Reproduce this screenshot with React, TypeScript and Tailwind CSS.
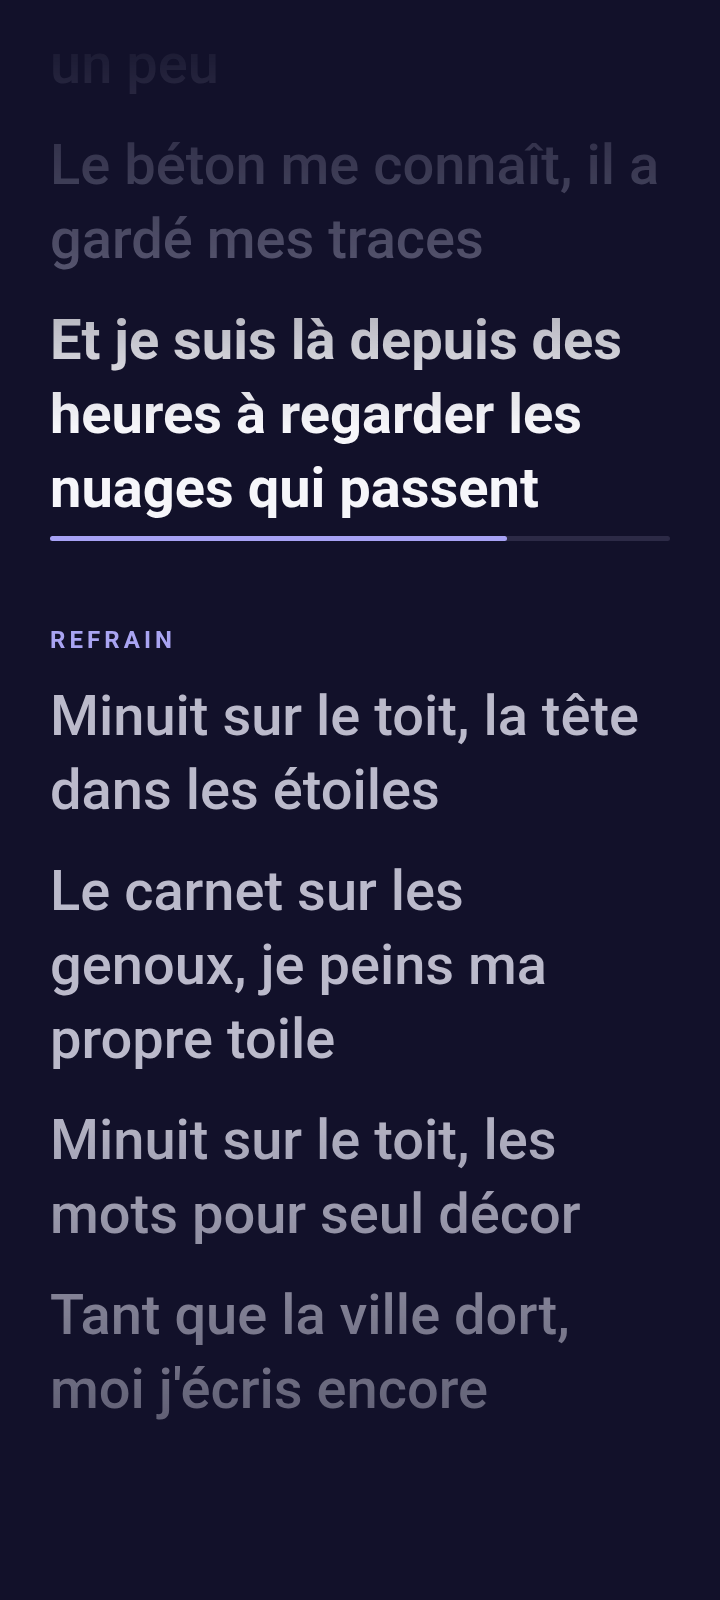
type Line = { text: string; state: "past" | "active" | "next"; section?: string };

const lines: Line[] = [
  { text: "un peu", state: "past" },
  { text: "Le béton me connaît, il a gardé mes traces", state: "past" },
  { text: "Et je suis là depuis des heures à regarder les nuages qui passent", state: "active" },
  { text: "Minuit sur le toit, la tête dans les étoiles", state: "next", section: "Refrain" },
  { text: "Le carnet sur les genoux, je peins ma propre toile", state: "next" },
  { text: "Minuit sur le toit, les mots pour seul décor", state: "next" },
  { text: "Tant que la ville dort, moi j'écris encore", state: "next" },
];

const progress = 73.7;

const LyricLine = ({ line }: { line: Line }) => {
  if (line.state === "active") {
    return (
      <div className="flex flex-col">
        <p className="max-w-[614px] text-[56px] leading-[74px] font-bold text-[#f6f6fa]">
          {line.text}
        </p>
        <div className="mt-[11px] h-[5px] w-full rounded-full bg-[#2c2a46]">
          <div
            className="h-full rounded-full bg-[#a7a2f5]"
            style={{ width: `${progress}%` }}
          />
        </div>
      </div>
    );
  }

  return (
    <div className="flex flex-col">
      {line.section && (
        <div className="mt-[58px] mb-[25px] text-[24px] leading-[28px] font-bold uppercase tracking-[0.17em] text-[#a9a4f2]">
          {line.section}
        </div>
      )}
      <p
        className={
          line.state === "past"
            ? "max-w-[614px] text-[56px] leading-[74px] font-medium text-[#7d7c96]"
            : "max-w-[614px] text-[56px] leading-[74px] font-medium text-[#bbbacb]"
        }
      >
        {line.text}
      </p>
    </div>
  );
};

export default function App() {
  return (
    <div className="h-[1600px] w-full overflow-hidden bg-[#12112a] font-['Roboto','Noto_Sans',sans-serif]">
      <div className="flex h-[1600px] flex-col gap-[27px] px-[50px] pt-[27px] [mask-image:linear-gradient(to_bottom,transparent_10px,black_427px,black_1090px,rgba(0,0,0,0.18)_1600px)] [-webkit-mask-image:linear-gradient(to_bottom,transparent_10px,black_427px,black_1090px,rgba(0,0,0,0.18)_1600px)]">
        {lines.map((line, i) => (
          <LyricLine key={i} line={line} />
        ))}
      </div>
    </div>
  );
}
